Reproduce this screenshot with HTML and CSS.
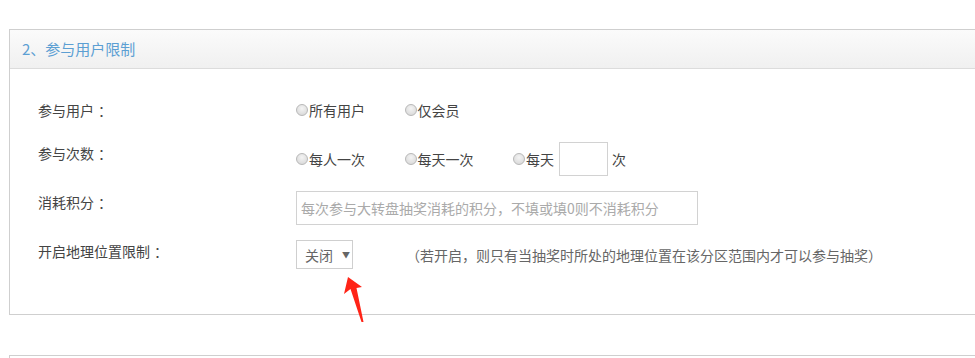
FILE: index.html
```html
<!DOCTYPE html>
<html lang="zh-CN">
<head>
<meta charset="utf-8">
<title>参与用户限制</title>
<link rel="stylesheet" href="styles.css">
</head>
<body>
<div class="page">
  <section class="panel">
    <div class="panel-head">2、参与用户限制</div>
    <div class="panel-body">
      <div class="row row-first">
        <div class="row-label">参与用户<span class="colon">：</span></div>
        <div class="row-ctrl">
          <label class="opt"><span class="radio"></span>所有用户</label>
          <label class="opt"><span class="radio"></span>仅会员</label>
        </div>
      </div>
      <div class="row">
        <div class="row-label">参与次数<span class="colon">：</span></div>
        <div class="row-ctrl">
          <label class="opt"><span class="radio"></span>每人一次</label>
          <label class="opt"><span class="radio"></span>每天一次</label>
          <label class="opt opt-auto"><span class="radio"></span>每天<span class="num-box"></span><span class="unit">次</span></label>
        </div>
      </div>
      <div class="row">
        <div class="row-label">消耗积分<span class="colon">：</span></div>
        <div class="row-ctrl">
          <div class="text-input">每次参与大转盘抽奖消耗的积分，不填或填0则不消耗积分</div>
        </div>
      </div>
      <div class="row row-last">
        <div class="row-label">开启地理位置限制<span class="colon">：</span></div>
        <div class="row-ctrl row-ctrl-auto">
          <div class="select"><span>关闭</span><span class="caret">▼</span></div>
          <span class="hint">（若开启，则只有当抽奖时所处的地理位置在该分区范围内才可以参与抽奖）</span>
        </div>
      </div>
    </div>
  </section>
  <section class="panel panel-next"></section>
  <svg class="pointer" width="30" height="52" viewBox="340 274 30 52" aria-hidden="true">
    <polygon points="348,277 362,287 356.5,288 363.5,322 361.5,322 350.5,289 344,294" fill="#ff2417"/>
  </svg>
</div>
</body>
</html>
```

FILE: styles.css
```css
html, body {
  margin: 0;
  padding: 0;
  background: #fff;
  overflow: hidden;
}
body {
  font-family: "Noto Sans CJK SC", "Noto Sans", sans-serif;
  font-size: 14px;
  color: #444;
}
.page {
  position: relative;
  padding-top: 29px;
  padding-left: 9px;
  height: 358px;
  box-sizing: border-box;
  overflow: hidden;
}
.panel {
  border: 1px solid #cfcfcf;
  margin-right: -20px;
}
.panel-head {
  height: 38px;
  line-height: 38px;
  padding-left: 12px;
  font-size: 15px;
  color: #5c9fd3;
  background: linear-gradient(#fbfbfb, #f0f0f0);
  border-bottom: 1px solid #dcdcdc;
}
.panel-body {
  padding: 24px 0 45px 28px;
  display: flex;
  flex-direction: column;
  gap: 15px;
}
.row {
  display: flex;
  align-items: flex-start;
}
.row-label {
  width: 258px;
  flex: none;
  line-height: 20px;
  padding-top: 1px;
  color: #444;
}
.colon {
  padding-left: 4px;
}
.row-first .row-label {
  padding-top: 7px;
}
.row-last .row-label {
  padding-top: 1px;
}
.row-ctrl {
  display: flex;
  align-items: center;
  min-height: 34px;
}
.row-ctrl-auto {
  min-height: 0;
}
.opt {
  width: 108.5px;
  display: flex;
  align-items: center;
  color: #444;
}
.opt-auto {
  width: auto;
}
.radio {
  width: 10px;
  height: 10px;
  border: 1px solid #b8b8b8;
  border-radius: 50%;
  background: radial-gradient(circle at 50% 35%, #f4f4f4, #d4d4d4);
  margin-right: 1px;
  flex: none;
}
.num-box {
  width: 47px;
  height: 32px;
  border: 1px solid #d2d2d2;
  margin-left: 5px;
}
.unit {
  margin-left: 4px;
}
.text-input {
  width: 396px;
  height: 32px;
  line-height: 32px;
  border: 1px solid #d2d2d2;
  padding-left: 4px;
  color: #aaa;
  white-space: nowrap;
  overflow: hidden;
}
.select {
  width: 47px;
  height: 27px;
  border: 1px solid #cfcfcf;
  display: flex;
  align-items: center;
  padding-left: 8px;
  color: #666;
}
.caret {
  font-size: 8px;
  margin-left: 9px;
  color: #666;
}
.hint {
  margin-left: 53px;
  color: #666;
}
.panel-next {
  margin-top: 40px;
  height: 4px;
  border-bottom: none;
}
.pointer {
  position: absolute;
  left: 340px;
  top: 274px;
}
```
